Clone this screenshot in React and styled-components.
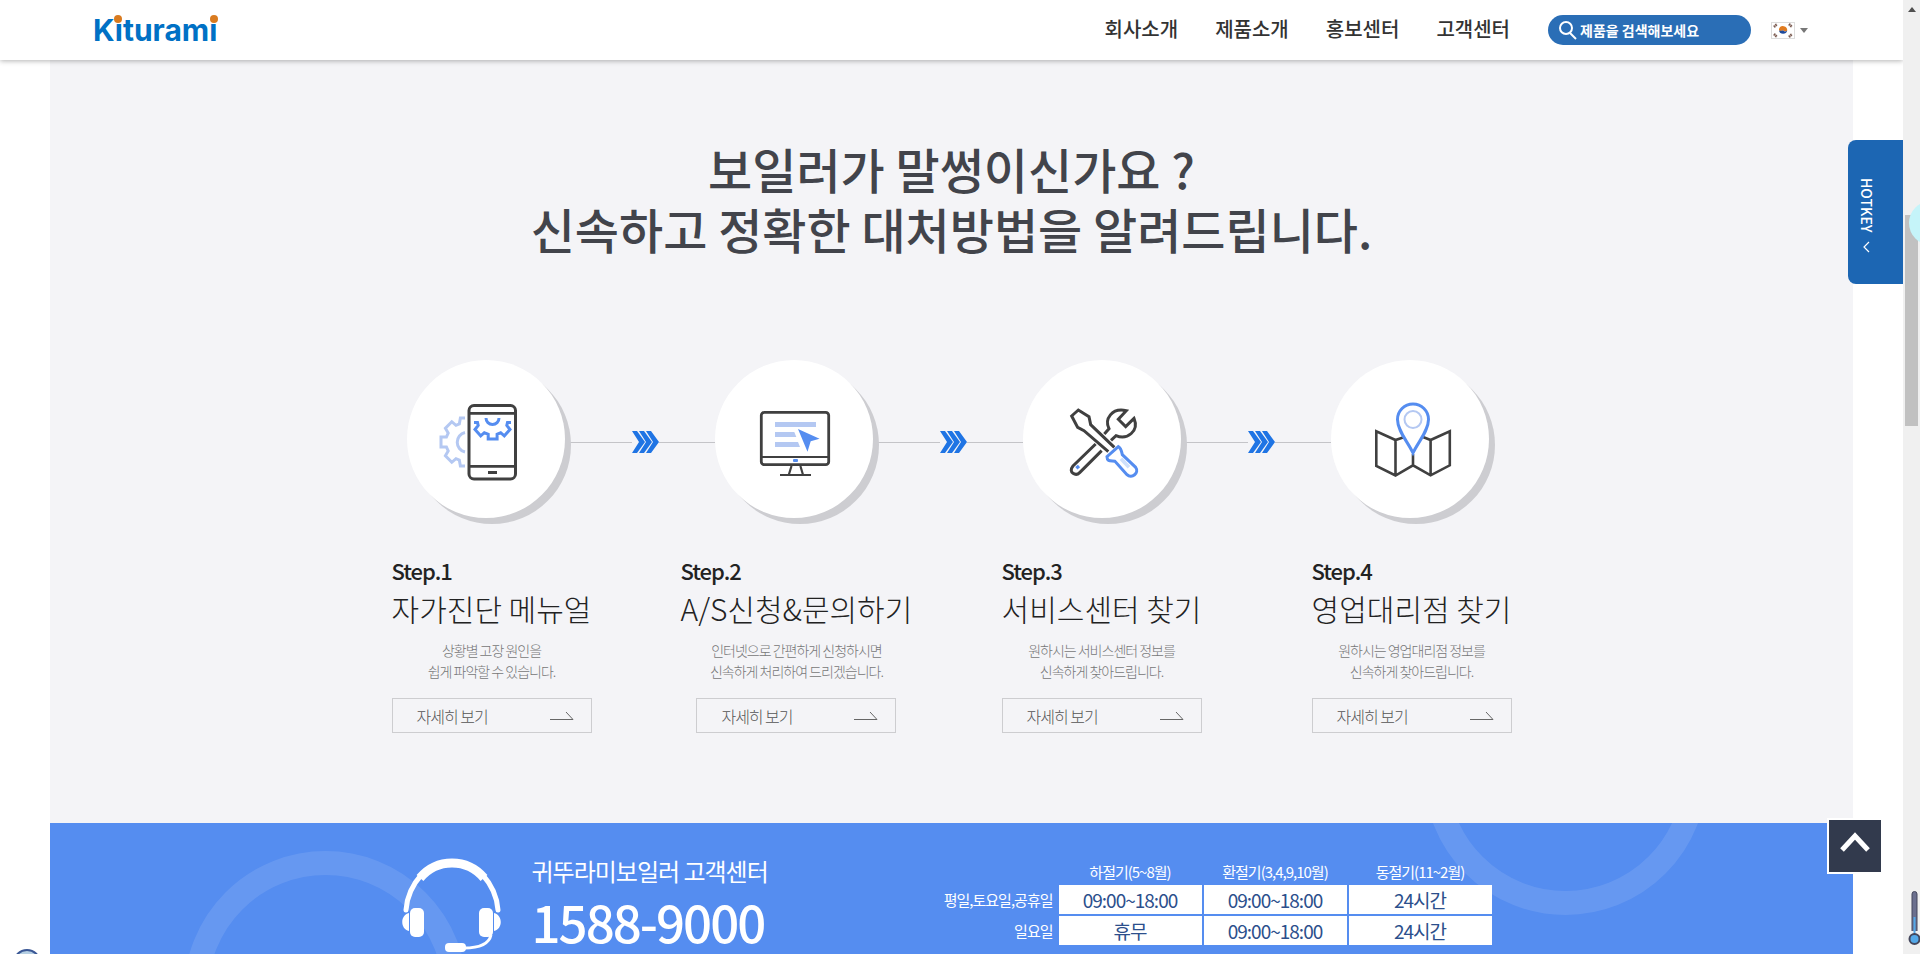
import React from 'react';
import styled, { createGlobalStyle } from 'styled-components';

const NAV_ITEMS = ['회사소개', '제품소개', '홍보센터', '고객센터'];

const STEPS = [
  {
    label: 'Step.1',
    title: '자가진단 메뉴얼',
    desc: ['상황별 고장 원인을', '쉽게 파악할 수 있습니다.'],
  },
  {
    label: 'Step.2',
    title: 'A/S신청&문의하기',
    desc: ['인터넷으로 간편하게 신청하시면', '신속하게 처리하여 드리겠습니다.'],
  },
  {
    label: 'Step.3',
    title: '서비스센터 찾기',
    desc: ['원하시는 서비스센터 정보를', '신속하게 찾아드립니다.'],
  },
  {
    label: 'Step.4',
    title: '영업대리점 찾기',
    desc: ['원하시는 영업대리점 정보를', '신속하게 찾아드립니다.'],
  },
];

const SEASONS = ['하절기(5~8월)', '환절기(3,4,9,10월)', '동절기(11~2월)'];

const HOURS = [
  { day: '평일,토요일,공휴일', times: ['09:00~18:00', '09:00~18:00', '24시간'] },
  { day: '일요일', times: ['휴무', '09:00~18:00', '24시간'] },
];

function App() {
  return (
    <>
      <GlobalStyle />
      <StWindow>
        <StPage>
          <Header />
          <StMain>
            <StGuide>
              <StGuideTitle>
                보일러가 말썽이신가요 ?
                <br />
                신속하고 정확한 대처방법을 알려드립니다.
              </StGuideTitle>
              <StCircleRow>
                <StCircle>
                  <PhoneIcon />
                </StCircle>
                <Connector />
                <StCircle>
                  <MonitorIcon />
                </StCircle>
                <Connector />
                <StCircle>
                  <ToolsIcon />
                </StCircle>
                <Connector />
                <StCircle>
                  <MapIcon />
                </StCircle>
              </StCircleRow>
              <StStepList>
                {STEPS.map((step) => (
                  <StStep key={step.label}>
                    <StStepLabel>{step.label}</StStepLabel>
                    <StStepTitle>{step.title}</StStepTitle>
                    <StStepDesc>
                      {step.desc[0]}
                      <br />
                      {step.desc[1]}
                    </StStepDesc>
                    <StMoreLink href="#more">
                      자세히 보기
                      <LongArrow />
                    </StMoreLink>
                  </StStep>
                ))}
              </StStepList>
            </StGuide>
            <CallCenter />
          </StMain>
          <StHotkey type="button">
            HOTKEY
            <svg width="12" height="12" viewBox="0 0 12 12" fill="none" stroke="#fff">
              <path d="M8 1L3 6l5 5" strokeWidth="1.2" />
            </svg>
          </StHotkey>
          <StTopButton type="button" aria-label="맨 위로">
            <svg width="30" height="22" viewBox="0 0 30 22" fill="none" stroke="#fff">
              <path d="M2 19L15 5l13 14" strokeWidth="5" />
            </svg>
          </StTopButton>
          <StCornerBadge />
        </StPage>
        <Scrollbar />
      </StWindow>
    </>
  );
}

const Header = () => {
  return (
    <StHeader>
      <StLogo href="#home" aria-label="Kiturami">
        <svg width="136" height="40" viewBox="0 0 136 40">
          <text x="0" y="31">
            Kıturamı
          </text>
          <circle cx="25" cy="9" r="4" />
          <circle cx="121" cy="9" r="4" />
        </svg>
      </StLogo>
      <StNav>
        {NAV_ITEMS.map((item) => (
          <a key={item} href="#menu">
            {item}
          </a>
        ))}
      </StNav>
      <StSearch>
        <svg width="20" height="20" viewBox="0 0 20 20" fill="none" stroke="#fff">
          <circle cx="8" cy="8" r="6" strokeWidth="2" />
          <path d="M12 13l6 6" strokeWidth="2" />
        </svg>
        <input type="text" aria-label="제품 검색" placeholder="제품을 검색해보세요" />
      </StSearch>
      <StLanguage type="button" aria-label="언어 선택">
        <svg width="24" height="17" viewBox="0 0 24 17">
          <rect x=".5" y=".5" width="23" height="16" fill="#fff" stroke="#ddd" />
          <path d="M8 7a4.200 4.200 0 0 1 8.200 1.500c-2 2-3 0-4.200 0s-2 1-4 0z" fill="#e07b1f" />
          <path d="M16.200 8.500a4.200 4.200 0 0 1-8.200 0c2 1 2.800-.5 4 0s2.200 2 4.200 0z" fill="#1d4a9c" />
          <path d="M3 5l3-3M18 2l3 3M3 12l3 3M18 15l3-3" stroke="#7a5a50" strokeWidth="2.500" strokeDasharray="1.500 .6" />
        </svg>
        <svg width="8" height="5" viewBox="0 0 8 5">
          <path d="M0 0h8L4 5z" fill="#777" />
        </svg>
      </StLanguage>
    </StHeader>
  );
};

const Connector = () => {
  return (
    <StConnector>
      <svg width="27" height="22" viewBox="0 0 27 22" fill="#1f74e4">
        <path d="M0 0h5l8 11-8 11H0l7-11z" />
        <path d="M7 0h5l8 11-8 11H7l7-11z" />
        <path d="M14 0h5l8 11-8 11h-5l7-11z" />
      </svg>
    </StConnector>
  );
};

const LongArrow = () => {
  return (
    <svg width="24" height="10" viewBox="0 0 24 10" fill="none" stroke="#666">
      <path d="M0 8.500h23L16 1" />
    </svg>
  );
};

const PhoneIcon = () => {
  return (
    <svg width="158" height="158" viewBox="0 0 158 158" fill="none">
      <path
        d="M58 58h-4.600l-1.100 6-3.300 1.300-4.200-3.600-6.400 6.600 2.800 4.700-1.800 4H34v10h5.400l1.800 4-2.800 4.700 6.400 6.600 4.200-3.600 3.300 1.300 1.100 6H58"
        stroke="#b4c8f2"
        strokeWidth="3"
      />
      <path d="M58 72.500a10 10 0 0 0 0 19.500" stroke="#b4c8f2" strokeWidth="3" />
      <rect x="62" y="45.500" width="46.500" height="73.500" rx="5" stroke="#404040" strokeWidth="3" />
      <path d="M62 53.300h46.500M62 106.300h46.500M81 112.500h9" stroke="#404040" strokeWidth="2.800" />
      <path
        d="M67 62.500h3.500l.7 3-3.200 4 5.700 6.300 3.600-3.100 3.900 1.600V79h8.900v-4.700l3.600-1.600 3.600 3.100 5.700-6.300-3.200-4 .7-3h3.500"
        stroke="#558df0"
        strokeWidth="3"
      />
      <path d="M79 58a6.500 6.500 0 0 0 13 0" stroke="#558df0" strokeWidth="3" />
    </svg>
  );
};

const MonitorIcon = () => {
  return (
    <svg width="158" height="158" viewBox="0 0 158 158" fill="none">
      <rect x="46.300" y="52.300" width="67.400" height="52.400" rx="3" stroke="#404040" strokeWidth="2.800" />
      <path
        d="M46 97h68M76.500 106l-2.600 8.500M85.400 106l2.500 8.500M65 115h31"
        stroke="#404040"
        strokeWidth="2.200"
      />
      <rect x="78" y="99" width="5" height="3" rx="1" fill="#558df0" />
      <path d="M60 62h41v5H60zM60 72h19.300l2 5H60zM60 82h23l2 5H60z" fill="#b4c8f2" />
      <path d="M83 69l21.600 9.700-8.900 2.600-3.200 10.400z" fill="#558df0" />
    </svg>
  );
};

const ToolsIcon = () => {
  return (
    <svg width="158" height="158" viewBox="0 0 158 158" fill="none">
      <g transform="translate(42 40) scale(.3333)" strokeWidth="9" stroke="#404040">
        <path d="M130 155L57 92 38 82 20 48l20-18 32 20 5 24 71 68" />
        <path d="M92 132l-68 66c-8 10-6 18 0 22s14 4 20-2l66-66" />
        <path d="M118 102l14-16c-14-28 8-64 52-54l-24 26 22 22 25-25c16 38-20 66-54 52l-15 14" />
        <path
          d="M160 140l-34 30c0 16 12 12 24 14l36 40c14 14 38-6 26-22l-40-38c-2-10-4-20-12-24z"
          stroke="#558df0"
        />
        <path d="M168 176l24 26" stroke="#cfe0fb" strokeWidth="11" />
        <path d="M34 205l8-7" stroke="#558df0" strokeWidth="10" />
      </g>
    </svg>
  );
};

const MapIcon = () => {
  return (
    <svg width="158" height="158" viewBox="0 0 158 158" fill="none">
      <path
        d="M72 77.500L64.500 80 45.300 71.300V106l19.200 9.500L82 105.300l17.600 10 19.200-10V71.300L99.600 80 92 77M64.500 80v35.500M99.600 80v35.300M82 94v11.300"
        stroke="#404040"
        strokeWidth="2.600"
      />
      <path
        d="M82 93C77 82 66.500 71 66.500 59.500a15.500 15.500 0 0 1 31 0C97.500 71 87 82 82 93z"
        stroke="#558df0"
        strokeWidth="3"
      />
      <circle cx="82" cy="59.500" r="8.500" stroke="#b4c8f2" strokeWidth="2" />
    </svg>
  );
};

const CallCenter = () => {
  return (
    <StCallCenter>
      <StRing $left="134px" $top="28px" />
      <StRing $left="1374px" $top="-191px" />
      <StCallInner>
        <HeadsetIcon />
        <StPhone>
          <p>귀뚜라미보일러 고객센터</p>
          <strong>1588-9000</strong>
        </StPhone>
        <StHours>
          <thead>
            <tr>
              <td />
              {SEASONS.map((season) => (
                <th key={season} scope="col">
                  {season}
                </th>
              ))}
            </tr>
          </thead>
          <tbody>
            {HOURS.map((row) => (
              <tr key={row.day}>
                <th scope="row">{row.day}</th>
                {row.times.map((time, i) => (
                  <td key={SEASONS[i]}>{time}</td>
                ))}
              </tr>
            ))}
          </tbody>
        </StHours>
      </StCallInner>
    </StCallCenter>
  );
};

const HeadsetIcon = () => {
  return (
    <svg width="100" height="98" viewBox="0 0 100 98" fill="none" stroke="#fff">
      <path d="M4 53C5 38 11 27 20 17M96 53c-1-15-7-26-16-36" strokeWidth="5" strokeLinecap="round" />
      <path d="M18 21c17-20 47-20 64 0" strokeWidth="9" />
      <rect x="8" y="51" width="14" height="29" rx="5" fill="#fff" stroke="none" />
      <rect x="77" y="51" width="14" height="29" rx="5" fill="#fff" stroke="none" />
      <path d="M7 56v18c-9-2-9-16 0-18zM92 56v18c9-2 9-16 0-18z" fill="#fff" stroke="none" />
      <path d="M89 78c-2 9-11 13-27 13" strokeWidth="3" />
      <rect x="43" y="86" width="21" height="9" rx="4" fill="#fff" stroke="none" />
    </svg>
  );
};

const Scrollbar = () => {
  return (
    <StScrollbar aria-hidden="true">
      <svg width="8" height="5" viewBox="0 0 8 5">
        <path d="M0 5h8L4 0z" fill="#505050" />
      </svg>
      <StThumb />
      <StBubble />
      <StThermometer width="12" height="58" viewBox="0 0 12 58">
        <path d="M4 40V3a2.500 2.500 0 0 1 5 0v37" fill="#6b6f8e" stroke="#44475c" />
        <path d="M6.500 26v18" stroke="#53a8e8" strokeWidth="2" />
        <circle cx="6.500" cy="48" r="5" fill="#53a8e8" stroke="#44475c" strokeWidth="2" />
      </StThermometer>
    </StScrollbar>
  );
};

const GlobalStyle = createGlobalStyle`
  * {
    box-sizing: border-box;
  }
  body {
    margin: 0;
    font-family: 'Noto Sans CJK KR', sans-serif;
    color: #222;
    background-color: #fff;
  }
  p, h2, h3 {
    margin: 0;
  }
  a {
    color: inherit;
    text-decoration: none;
  }
  button {
    padding: 0;
    border: 0;
    font-family: inherit;
    cursor: pointer;
  }
`;

const StWindow = styled.div`
  display: flex;
  height: 100vh;
  overflow: hidden;
`;

const StPage = styled.div`
  flex: 1;
  min-width: 0;
  position: relative;
  overflow: hidden;
`;

const StHeader = styled.header`
  display: flex;
  align-items: center;
  height: 60px;
  padding: 0 95px 0 93px;
  background-color: #fff;
  box-shadow: 0 1px 5px rgba(0, 0, 0, 0.3);
  position: relative;
  z-index: 1;
`;

const StLogo = styled.a`
  display: flex;
  margin-right: auto;
  & text {
    font-family: Inter, sans-serif;
    font-size: 30px;
    font-weight: 700;
    fill: #0071c5;
  }
  & circle {
    fill: #d97b20;
  }
`;

const StNav = styled.nav`
  display: flex;
  gap: 37px;
  margin-right: 38px;
  padding-bottom: 4px;
  font-size: 20px;
  font-weight: 500;
  color: #333;
`;

const StSearch = styled.label`
  display: flex;
  align-items: center;
  gap: 2px;
  width: 203px;
  height: 30px;
  padding: 0 10px;
  border-radius: 15px;
  background-color: #2a6eb6;
  & input {
    flex: 1;
    min-width: 0;
    padding: 0;
    border: 0;
    outline: 0;
    background: none;
    font-family: inherit;
    font-size: 14px;
    font-weight: 700;
    color: #fff;
  }
  & input::placeholder {
    color: #fff;
    opacity: 1;
  }
`;

const StLanguage = styled.button`
  display: flex;
  align-items: center;
  gap: 5px;
  margin-left: 20px;
  background: none;
`;

const StMain = styled.main`
  padding: 0 50px;
`;

const StGuide = styled.section`
  display: flex;
  flex-direction: column;
  align-items: center;
  padding: 78px 0 90px;
  background-color: #f4f4f7;
`;

const StGuideTitle = styled.h2`
  font-size: 48px;
  font-weight: 500;
  line-height: 60px;
  text-align: center;
  color: #42444b;
`;

const StCircleRow = styled.div`
  display: flex;
  align-items: center;
  margin: 102px 8px 36px 0;
`;

const StCircle = styled.div`
  width: 158px;
  height: 158px;
  border-radius: 50%;
  background-color: #fff;
  box-shadow: 6px 6px 0 #cdcdd1;
  position: relative;
`;

const StConnector = styled.div`
  display: flex;
  align-items: center;
  width: 150px;
  padding-top: 6px;
  &::before,
  &::after {
    content: '';
    height: 1px;
    background-color: #c4c4c8;
  }
  &::before {
    flex: 6;
  }
  &::after {
    flex: 5;
  }
`;

const StStepList = styled.div`
  display: grid;
  grid-template-columns: 289px 321px 310px 200px;
  justify-items: start;
`;

const StStep = styled.article`
  display: flex;
  flex-direction: column;
  align-items: center;
`;

const StStepLabel = styled.p`
  align-self: flex-start;
  font-size: 22px;
  font-weight: 500;
  line-height: 32px;
  letter-spacing: -1px;
`;

const StStepTitle = styled.h3`
  font-size: 30px;
  font-weight: 300;
  line-height: 44px;
  white-space: nowrap;
`;

const StStepDesc = styled.p`
  margin: 10px 0 16px;
  font-size: 14px;
  font-weight: 300;
  line-height: 21px;
  letter-spacing: -1px;
  text-align: center;
  color: #777;
`;

const StMoreLink = styled.a`
  display: flex;
  align-items: center;
  justify-content: space-between;
  width: 200px;
  height: 35px;
  padding: 0 17px 0 24px;
  border: 1px solid #cdcdd0;
  font-size: 16px;
  font-weight: 300;
  letter-spacing: -1px;
  color: #555;
`;

const StCallCenter = styled.section`
  min-height: 200px;
  background-color: #558df0;
  color: #fff;
  position: relative;
  overflow: hidden;
`;

const StRing = styled.div`
  width: 283px;
  height: 283px;
  border: 24px solid rgba(255, 255, 255, 0.1);
  border-radius: 50%;
  position: absolute;
  left: ${(props) => props.$left};
  top: ${(props) => props.$top};
`;

const StCallInner = styled.div`
  display: flex;
  align-items: flex-start;
  width: 1100px;
  margin: 0 auto;
  padding: 34px 8px 0 0;
  position: relative;
`;

const StPhone = styled.div`
  margin-left: 30px;
  & p {
    margin-bottom: 6px;
    font-size: 24px;
    line-height: 28px;
    letter-spacing: -1px;
  }
  & strong {
    display: block;
    font-size: 51px;
    font-weight: 500;
    line-height: 60px;
    letter-spacing: -2px;
  }
`;

const StHours = styled.table`
  margin-left: auto;
  border-collapse: separate;
  border-spacing: 2px;
  & th {
    padding: 0 4px;
    font-size: 15px;
    font-weight: 400;
    letter-spacing: -1px;
    white-space: nowrap;
  }
  & thead th {
    width: 143px;
    height: 24px;
  }
  & tbody th {
    text-align: right;
  }
  & tbody td {
    height: 29px;
    padding: 0;
    font-size: 19px;
    line-height: 28px;
    letter-spacing: -1px;
    text-align: center;
    background-color: #fff;
    color: #2c4f8c;
  }
`;

const StHotkey = styled.button`
  display: flex;
  align-items: center;
  gap: 8px;
  width: 55px;
  height: 144px;
  padding: 38px 18px 0 0;
  border-radius: 8px 0 0 8px;
  background-color: #1c66b3;
  font-size: 14px;
  font-weight: 500;
  color: #fff;
  writing-mode: vertical-rl;
  position: absolute;
  top: 140px;
  right: 0;
`;

const StTopButton = styled.button`
  display: flex;
  align-items: center;
  justify-content: center;
  width: 56px;
  height: 56px;
  padding-bottom: 8px;
  border: 2px solid #fff;
  background-color: #323a4d;
  position: absolute;
  right: 20px;
  bottom: 80px;
`;

const StCornerBadge = styled.div`
  width: 28px;
  height: 28px;
  border: 2px solid #3a5795;
  border-radius: 50%;
  background-color: #b5cfe3;
  position: absolute;
  left: 13px;
  bottom: -23px;
`;

const StScrollbar = styled.div`
  display: flex;
  flex-direction: column;
  align-items: center;
  width: 17px;
  padding: 7px 2px 0;
  background-color: #f0f0f0;
  position: relative;
  overflow: hidden;
`;

const StThumb = styled.div`
  width: 13px;
  height: 211px;
  margin-top: 203px;
  background-color: #c1c1c1;
`;

const StBubble = styled.div`
  width: 44px;
  height: 44px;
  border-radius: 50%;
  background-color: #c5f4f9;
  position: absolute;
  top: 201px;
  left: 6px;
`;

const StThermometer = styled.svg`
  position: absolute;
  right: 0;
  bottom: 5px;
`;

export default App;
